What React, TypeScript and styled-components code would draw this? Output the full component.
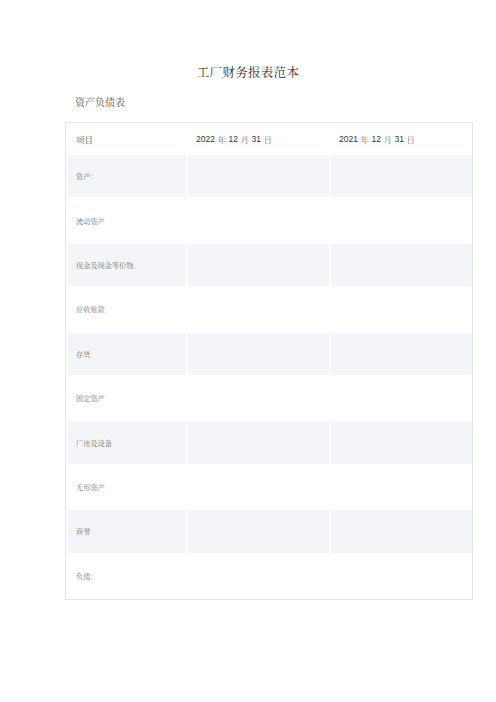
import React from 'react';
import styled, { createGlobalStyle } from 'styled-components';

const GlobalStyle = createGlobalStyle`
  html, body {
    margin: 0;
    padding: 0;
    background: #ffffff;
  }
`;

const serif = `"Liberation Serif", "Noto Serif CJK SC", "Noto Sans CJK SC", serif`;
const sans = `"Liberation Sans", "Noto Sans CJK SC", sans-serif`;

const rows = [
  '资产：',
  '流动资产',
  '现金及现金等价物',
  '应收账款',
  '存货',
  '固定资产',
  '厂房及设备',
  '无形资产',
  '商誉',
  '负债：',
];

const DateLabel: React.FC<{ year: string }> = ({ year }) => (
  <>
    <Num>{year}</Num>
    <Unit>年</Unit>
    <Num>12</Num>
    <Unit>月</Unit>
    <Num>31</Num>
    <Unit>日</Unit>
  </>
);

const App: React.FC = () => (
  <>
    <GlobalStyle />
    <Page>
      <Title>工厂财务报表范本</Title>
      <Subtitle>资产负债表</Subtitle>
      <Sheet>
        <HeadCell>项目</HeadCell>
        <HeadCell>
          <DateLabel year="2022" />
        </HeadCell>
        <HeadCell>
          <DateLabel year="2021" />
        </HeadCell>
        {rows.map((label, i) => (
          <React.Fragment key={label}>
            <Cell shaded={i % 2 === 0}>{label}</Cell>
            <Cell shaded={i % 2 === 0} />
            <Cell shaded={i % 2 === 0} />
          </React.Fragment>
        ))}
      </Sheet>
    </Page>
  </>
);

export default App;

const Page = styled.div`
  width: 496px;
  min-height: 702px;
  padding: 65px 0 0 65px;
  box-sizing: border-box;
`;

const Title = styled.div`
  width: 366px;
  text-align: center;
  font-family: ${serif};
  font-size: 12.5px;
  line-height: 16px;
  color: #333333;
  letter-spacing: 0.3px;
`;

const Subtitle = styled.div`
  margin-top: 15px;
  padding-left: 10px;
  font-family: ${serif};
  font-size: 10px;
  line-height: 14px;
  color: #555555;
`;

const Sheet = styled.div`
  margin-top: 12px;
  width: 408px;
  box-sizing: border-box;
  display: grid;
  grid-template-columns: 118px 141px 141px;
  grid-template-rows: 28px;
  grid-auto-rows: 42.4px;
  gap: 2px;
  padding: 2px;
  border: 1px solid #e4e4e4;
`;

const HeadCell = styled.div`
  display: flex;
  align-items: center;
  padding-left: 8px;
  font-family: ${serif};
  font-size: 8.5px;
  color: #555555;
  white-space: nowrap;
`;

const Num = styled.span`
  font-family: ${sans};
  font-size: 8.5px;
  color: #333333;
`;

const Unit = styled.span`
  margin: 0 2.5px;
  color: #777777;
`;

const Cell = styled.div<{ shaded: boolean }>`
  display: flex;
  align-items: center;
  padding-left: 8px;
  background: ${({ shaded }) => (shaded ? '#f4f5f8' : '#ffffff')};
  font-family: ${serif};
  font-size: 7.2px;
  color: #777777;
  white-space: nowrap;
`;
